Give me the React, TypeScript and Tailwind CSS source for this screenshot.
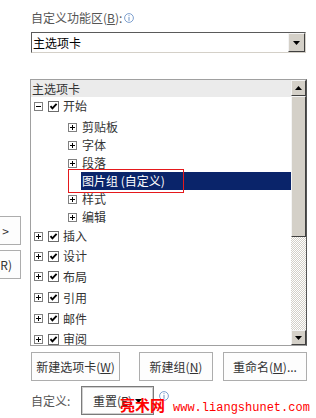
import React from "react";

const font = "font-['Noto_Sans_CJK_SC',sans-serif]";

function Expander({ open }: { open?: boolean }) {
  return (
    <svg width="9" height="9" viewBox="0 0 9 9" className="shrink-0">
      <rect x="0.5" y="0.5" width="8" height="8" fill="#fff" stroke="#808080" />
      <line x1="2" y1="4.5" x2="7" y2="4.5" stroke="#000" />
      {!open && <line x1="4.5" y1="2" x2="4.5" y2="7" stroke="#000" />}
    </svg>
  );
}

function Check() {
  return (
    <svg width="11" height="11" viewBox="0 0 11 11" className="shrink-0">
      <rect x="0.5" y="0.5" width="10" height="10" fill="#fff" stroke="#6b6b6b" />
      <path d="M2.5 5.2 L4.4 7.3 L8.6 2.8" fill="none" stroke="#000" strokeWidth="1.9" />
    </svg>
  );
}

function Info() {
  return (
    <svg width="10" height="10" viewBox="0 0 10 10" className="shrink-0">
      <circle cx="5" cy="5" r="4.4" fill="none" stroke="#6f95c8" strokeWidth="0.9" />
      <rect x="4.5" y="2.2" width="1" height="1" fill="#6f95c8" />
      <rect x="4.5" y="4" width="1" height="3.8" fill="#6f95c8" />
    </svg>
  );
}

function Arrow({ up }: { up?: boolean }) {
  return (
    <svg width="7" height="4" viewBox="0 0 7 4">
      <polygon points={up ? "3.5,0 7,4 0,4" : "0,0 7,0 3.5,4"} fill="#000" />
    </svg>
  );
}

const subs = ["剪贴板", "字体", "段落", "图片组 (自定义)", "样式", "编辑"];
const tops: [string, string][] = [
  ["插入", "h-[20px]"],
  ["设计", "h-[20px]"],
  ["布局", "h-[21px]"],
  ["引用", "h-[21px]"],
  ["邮件", "h-[21px]"],
  ["审阅", "h-[20px]"],
];

export default function App() {
  return (
    <div className={`relative flex h-[418px] w-[316px] overflow-hidden bg-white text-[12px] text-[#333] ${font}`}>
      {/* left buttons, cut off by the window edge */}
      <div className="flex w-[21px] shrink-0 flex-col items-end gap-[5px] overflow-hidden pt-[216px]">
        <div className="flex h-[29px] w-[80px] shrink-0 items-center justify-end border border-[#adadad] bg-[#fdfdfd] pr-[11px]">
          添加(A) &gt;
        </div>
        <div className="flex h-[29px] w-[80px] shrink-0 items-center justify-end border border-[#adadad] bg-[#fdfdfd] pr-[8px]">
          &lt;&lt; 删除(R)
        </div>
      </div>

      <div className="ml-[9px] flex w-[277px] shrink-0 flex-col">
        <div className="mt-[10px] flex h-[16px] items-center gap-[2px] pl-[1px] leading-[16px] text-[#555]">
          <span>
            自定义功能区(<span className="underline">B</span>):
          </span>
          <Info />
        </div>

        <div className="ml-[1px] mt-[6px] flex h-[21px] w-[275px] border border-b-[#d4d0c8] border-l-[#5a5a5a] border-r-[#d4d0c8] border-t-[#5a5a5a] bg-white">
          <div className="flex flex-1 items-center pl-[1px] leading-none text-black">主选项卡</div>
          <div className="flex w-[17px] items-center justify-center border border-b-[#404040] border-l-[#f4f4f4] border-r-[#404040] border-t-[#f4f4f4] bg-[#d4d0c8]">
            <Arrow />
          </div>
        </div>

        {/* tree list */}
        <div className="mt-[26px] flex h-[267px] w-[277px] border border-[#a0a0a0] border-r-[#555]">
          <div className="flex flex-1 flex-col overflow-hidden">
            <div className="flex h-[17px] shrink-0 items-center bg-[#ebebeb] pl-[1px] leading-none">主选项卡</div>
            <div className="flex h-[18px] shrink-0 items-center pl-[3px] leading-none">
              <Expander open />
              <span className="ml-[5px]"><Check /></span>
              <span className="ml-[4px]">开始</span>
            </div>
            <div className="h-[3px] shrink-0" />
            {subs.map((s) => {
              const sel = s.startsWith("图片组");
              return (
                <div key={s} className="relative flex h-[18px] shrink-0 items-center leading-none">
                  {sel ? (
                    <>
                      <div className="ml-[50px] flex h-[18px] flex-1 items-center bg-[#0a246a] pl-[1px] text-white">{s}</div>
                      <div className="absolute left-[37px] top-[-3px] h-[24px] w-[116px] border border-[#e5191c]" />
                    </>
                  ) : (
                    <>
                      <span className="ml-[37px]"><Expander /></span>
                      <span className="ml-[5px]">{s}</span>
                    </>
                  )}
                </div>
              );
            })}
            {tops.map(([t, h]) => (
              <div key={t} className={`flex ${h} shrink-0 items-center pl-[3px] leading-none`}>
                <Expander />
                <span className="ml-[5px]"><Check /></span>
                <span className="ml-[4px]">{t}</span>
              </div>
            ))}
          </div>

          {/* scrollbar */}
          <div className="flex w-[15px] shrink-0 flex-col">
            <div className="flex h-[16px] shrink-0 items-center justify-center border border-b-[#404040] border-l-[#f4f4f4] border-r-[#404040] border-t-[#f4f4f4] bg-[#d4d0c8]">
              <Arrow up />
            </div>
            <div className="h-[141px] shrink-0 border border-b-[#404040] border-l-[#f4f4f4] border-r-[#404040] border-t-[#f4f4f4] bg-[#d4d0c8]" />
            <div className="flex-1 bg-[image:repeating-conic-gradient(#d4d0c8_0%_25%,#ffffff_0%_50%)] bg-[length:2px_2px]" />
            <div className="flex h-[15px] shrink-0 items-center justify-center border border-b-[#404040] border-l-[#f4f4f4] border-r-[#404040] border-t-[#f4f4f4] bg-[#d4d0c8]">
              <Arrow />
            </div>
          </div>
        </div>

        <div className="mt-[6px] flex h-[29px]">
          <div className="ml-[1px] flex w-[89px] items-center justify-center border border-[#adadad] bg-[#fdfdfd]">
            新建选项卡(<span className="underline">W</span>)
          </div>
          <div className="ml-[19px] flex w-[74px] items-center justify-center border border-[#adadad] bg-[#fdfdfd]">
            新建组(<span className="underline">N</span>)
          </div>
          <div className="ml-[10px] flex w-[84px] items-center justify-center border border-[#adadad] bg-[#fdfdfd]">
            重命名(<span className="underline">M</span>)...
          </div>
        </div>

        <div className="mt-[5px] flex h-[29px] items-center">
          <span className="ml-[1px] w-[50px] text-[#555]">自定义:</span>
          <div className="flex h-[29px] w-[73px] items-center justify-center gap-[3px] border border-[#7a7a7a] bg-[#fdfdfd] shadow-[inset_0_0_0_1px_#cfcfcf]">
            <span>重置(E)</span>
            <Arrow />
          </div>
          <span className="mb-[10px] ml-[5px]"><Info /></span>
        </div>
      </div>

      {/* site watermark over the screenshot */}
      <div className="absolute left-[120px] top-[396px] flex items-baseline gap-[8px] text-[#f00]">
        <span className="text-[15px] font-bold leading-[18px]">亮术网</span>
        <span className="font-['Liberation_Mono',monospace] text-[12px] leading-[18px]">www.liangshunet.com</span>
      </div>
    </div>
  );
}
